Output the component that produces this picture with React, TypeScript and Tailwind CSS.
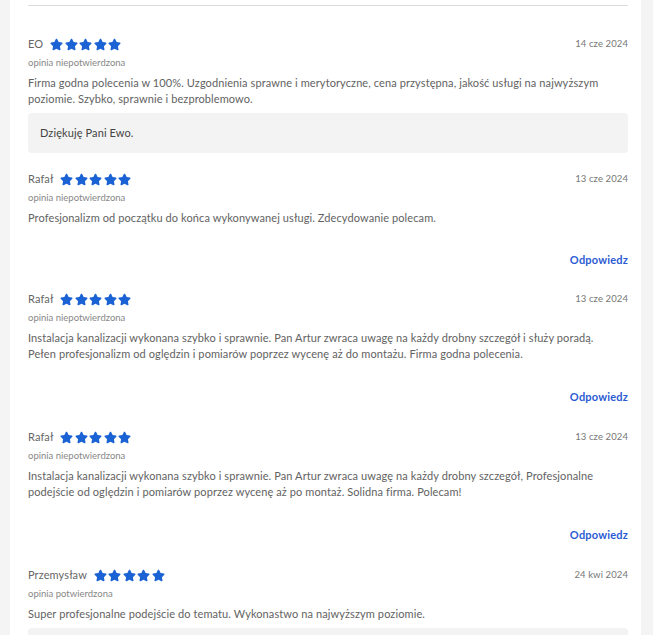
import { FaStar } from "react-icons/fa";

type Review = {
  name: string;
  date: string;
  status: string;
  lines: string[];
  reply?: string;
};

const reviews: Review[] = [
  {
    name: "EO",
    date: "14 cze 2024",
    status: "opinia niepotwierdzona",
    lines: [
      "Firma godna polecenia w 100%. Uzgodnienia sprawne i merytoryczne, cena przystępna, jakość usługi na najwyższym",
      "poziomie. Szybko, sprawnie i bezproblemowo.",
    ],
    reply: "Dziękuję Pani Ewo.",
  },
  {
    name: "Rafał",
    date: "13 cze 2024",
    status: "opinia niepotwierdzona",
    lines: ["Profesjonalizm od początku do końca wykonywanej usługi. Zdecydowanie polecam."],
  },
  {
    name: "Rafał",
    date: "13 cze 2024",
    status: "opinia niepotwierdzona",
    lines: [
      "Instalacja kanalizacji wykonana szybko i sprawnie. Pan Artur zwraca uwagę na każdy drobny szczegół i służy poradą.",
      "Pełen profesjonalizm od oględzin i pomiarów poprzez wycenę aż do montażu. Firma godna polecenia.",
    ],
  },
  {
    name: "Rafał",
    date: "13 cze 2024",
    status: "opinia niepotwierdzona",
    lines: [
      "Instalacja kanalizacji wykonana szybko i sprawnie. Pan Artur zwraca uwagę na każdy drobny szczegół, Profesjonalne",
      "podejście od oględzin i pomiarów poprzez wycenę aż po montaż. Solidna firma. Polecam!",
    ],
  },
  {
    name: "Przemysław",
    date: "24 kwi 2024",
    status: "opinia potwierdzona",
    lines: ["Super profesjonalne podejście do tematu. Wykonastwo na najwyższym poziomie."],
    reply: " ",
  },
];

function Stars() {
  return (
    <div className="flex items-center gap-[1.5px]">
      {[0, 1, 2, 3, 4].map((i) => (
        <FaStar key={i} className="h-[13px] w-[13px] text-[#1b62d4]" />
      ))}
    </div>
  );
}

function ReviewItem({ r }: { r: Review }) {
  const multi = r.lines.length > 1;
  const pad = r.reply ? "pb-[17px]" : multi ? "pb-[23px]" : "pb-[22px]";
  return (
    <div className={pad}>
      <div className="flex h-[18px] items-center justify-between">
        <div className="flex items-center gap-[7px]">
          <span className="text-[11px] tracking-[0.1px] text-[#666]">{r.name}</span>
          <Stars />
        </div>
        <span className="text-[9.5px] tracking-[0.1px] text-[#777]">{r.date}</span>
      </div>
      <div className="mt-[3px] text-[9.5px] leading-[14px] text-[#888]">{r.status}</div>
      <div className="mt-[5px] text-[11px] leading-[16px] tracking-[0.1px] text-[#626262]">
        {r.lines.map((l, i) => (
          <div key={i}>{l}</div>
        ))}
      </div>
      {r.reply ? (
        <div className="mt-[6px] flex h-[40px] items-center rounded-[4px] bg-[#f3f3f3] pl-[12px] text-[11px] tracking-[0.1px] text-[#444]">
          {r.reply}
        </div>
      ) : (
        <div
          className={`${multi ? "mt-[27px]" : "mt-[26px]"} flex justify-end text-[11px] font-bold leading-[16px] tracking-[0.2px] text-[#2b5bd3]`}
        >
          Odpowiedz
        </div>
      )}
    </div>
  );
}

export default function App() {
  return (
    <div
      className="flex h-[635px] w-full overflow-hidden bg-[#f4f4f4]"
      style={{ fontFamily: "Lato, 'Noto Sans', sans-serif" }}
    >
      <div className="ml-[10px] w-[631px] bg-white pl-[18px] pr-[13px]">
        <div className="mt-[5px] h-px bg-[#dcdcdc]" />
        <div className="mt-[29px]">
          {reviews.map((r, i) => (
            <ReviewItem key={i} r={r} />
          ))}
        </div>
      </div>
    </div>
  );
}
